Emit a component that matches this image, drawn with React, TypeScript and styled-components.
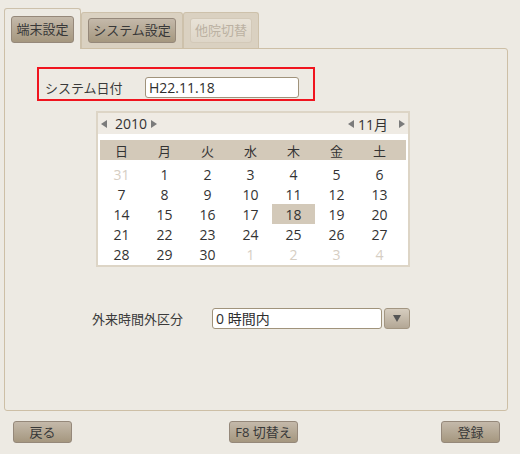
import styled, { createGlobalStyle } from "styled-components";

const GlobalStyle = createGlobalStyle`
    body {
        margin: 0;
        font-family: "Open Sans", "Noto Sans CJK JP", sans-serif;
        color: #333;
    }
`;

const Page = styled.div`
    width: 520px;
    height: 454px;
    background: #edeae3;
    display: flex;
    flex-direction: column;
    box-sizing: border-box;
`;

const TabBar = styled.div`
    display: flex;
    align-items: flex-end;
    height: 48px;
    padding: 8px 0 0 4px;
    box-sizing: border-box;
`;

const Tab = styled.div<{ $active?: boolean }>`
    border: 1px solid #cdc1ab;
    border-bottom: none;
    border-radius: 3px 3px 0 0;
    background: ${(p) => (p.$active ? "#edeae3" : "#dad1c1")};
    padding: ${(p) => (p.$active ? "7px 6px 6px" : "5px 6px 5px")};
    margin-bottom: ${(p) => (p.$active ? "-1px" : "0")};
    position: relative;
    z-index: ${(p) => (p.$active ? 1 : 0)};
    display: flex;
`;

const Button = styled.button<{ $w: number; $h?: number; $disabled?: boolean }>`
    width: ${(p) => p.$w}px;
    height: ${(p) => p.$h ?? 22}px;
    padding: 0;
    border-radius: 3px;
    font-family: "Open Sans", "Noto Sans CJK JP", sans-serif;
    font-size: 13px;
    line-height: 1;
    border: 1px solid ${(p) => (p.$disabled ? "#d3c9b8" : "#95887a")};
    background: ${(p) =>
        p.$disabled
            ? "linear-gradient(#e8e2d7, #ded6c8)"
            : "linear-gradient(#c4b9aa, #a5977f)"};
    color: ${(p) => (p.$disabled ? "#bbb1a2" : "#383838")};
    box-sizing: border-box;
    display: flex;
    align-items: center;
    justify-content: center;
`;

const Panel = styled.div`
    margin: 0 12px 0 4px;
    height: 363px;
    border: 1px solid #cdbfa6;
    border-radius: 0 3px 3px 3px;
    box-sizing: border-box;
    display: flex;
    flex-direction: column;
    align-items: flex-start;
`;

const Highlight = styled.div`
    margin: 18px 0 0 32px;
    width: 278px;
    height: 34px;
    border: 2px solid #f0141e;
    box-sizing: border-box;
    padding: 7px 0 0 6px;
    display: flex;
    align-items: center;
`;

const Label = styled.span<{ $w: number }>`
    width: ${(p) => p.$w}px;
    font-size: 13px;
    color: #3a3a3a;
`;

const TextField = styled.div<{ $w: number }>`
    width: ${(p) => p.$w}px;
    height: 21px;
    border: 1px solid #a0937b;
    border-radius: 3px;
    background: #fff;
    box-sizing: border-box;
    padding: 0 3px;
    font-size: 14px;
    line-height: 19px;
    color: #2e2e2e;
    white-space: nowrap;
`;

const Calendar = styled.div`
    margin: 10px 0 0 91px;
    width: 314px;
    border: 2px solid #ddd5c6;
    box-sizing: border-box;
    background: #fff;
`;

const CalHeader = styled.div`
    height: 21px;
    background: #efebe4;
    display: flex;
    align-items: center;
    justify-content: space-between;
    padding: 0 3px;
    font-size: 14px;
    color: #333;
`;

const Stepper = styled.div`
    display: flex;
    align-items: center;
    gap: 4px;
`;

const CalBody = styled.div`
    padding: 6px 2px 1px;
`;

const WeekRow = styled.div`
    display: grid;
    grid-template-columns: repeat(7, 43px);
    height: 20px;
    background: #d3c9b9;
    align-items: center;
    margin-bottom: 4px;
`;

const DayGrid = styled.div`
    display: grid;
    grid-template-columns: repeat(7, 43px);
    grid-auto-rows: 20px;
`;

const Cell = styled.div<{ $muted?: boolean; $selected?: boolean; $head?: boolean }>`
    display: flex;
    align-items: center;
    justify-content: center;
    font-size: ${(p) => (p.$head ? 13 : 14)}px;
    color: ${(p) => (p.$muted ? "#d6cec3" : "#333")};
    background: ${(p) => (p.$selected ? "#d3c9b9" : "transparent")};
`;

const ComboRow = styled.div`
    margin: 41px 0 0 87px;
    display: flex;
    align-items: center;
`;

const DropButton = styled.div`
    margin-left: 2px;
    width: 26px;
    height: 21px;
    border: 1px solid #a39682;
    border-radius: 3px;
    background: linear-gradient(#d6cdbf, #b3a795);
    box-sizing: border-box;
    display: flex;
    align-items: center;
    justify-content: center;
`;

const Footer = styled.div`
    display: flex;
    align-items: flex-start;
    padding: 10px 0 0 13px;
`;

const Gap = styled.div<{ $w: number }>`
    width: ${(p) => p.$w}px;
`;

const Spacer = styled.span<{ $w: number }>`
    display: inline-block;
    width: ${(p) => p.$w}px;
`;

function Arrow({ dir }: { dir: "l" | "r" }) {
    return (
        <svg width="6" height="8" viewBox="0 0 6 8">
            <polygon points={dir === "l" ? "6,0 0,4 6,8" : "0,0 6,4 0,8"} fill="#7b7b7b" />
        </svg>
    );
}

const weekdays = ["日", "月", "火", "水", "木", "金", "土"];

const days: { d: number; muted?: boolean }[] = [
    { d: 31, muted: true },
    ...Array.from({ length: 30 }, (_, i) => ({ d: i + 1 })),
    { d: 1, muted: true },
    { d: 2, muted: true },
    { d: 3, muted: true },
    { d: 4, muted: true },
];

function App() {
    return (
        <Page>
            <GlobalStyle />
            <TabBar>
                <Tab $active>
                    <Button $w={63} $h={27}>端末設定</Button>
                </Tab>
                <Tab>
                    <Button $w={88} $h={25}>システム設定</Button>
                </Tab>
                <Tab>
                    <Button $w={62} $h={25} $disabled>他院切替</Button>
                </Tab>
            </TabBar>
            <Panel>
                <Highlight>
                    <Label $w={100}>システム日付</Label>
                    <TextField $w={154}>H22.11.18</TextField>
                </Highlight>
                <Calendar>
                    <CalHeader>
                        <Stepper>
                            <Arrow dir="l" />
                            <Spacer $w={0} />
                            <span>2010</span>
                            <Arrow dir="r" />
                        </Stepper>
                        <Stepper>
                            <Arrow dir="l" />
                            <span>11月</span>
                            <Spacer $w={3} />
                            <Arrow dir="r" />
                        </Stepper>
                    </CalHeader>
                    <CalBody>
                        <WeekRow>
                            {weekdays.map((w) => (
                                <Cell key={w} $head>{w}</Cell>
                            ))}
                        </WeekRow>
                        <DayGrid>
                            {days.map((x, i) => (
                                <Cell key={i} $muted={x.muted} $selected={!x.muted && x.d === 18}>
                                    {x.d}
                                </Cell>
                            ))}
                        </DayGrid>
                    </CalBody>
                </Calendar>
                <ComboRow>
                    <Label $w={120}>外来時間外区分</Label>
                    <TextField $w={170}>0 時間内</TextField>
                    <DropButton>
                        <svg width="8" height="7" viewBox="0 0 8 7">
                            <polygon points="0,0 8,0 4,7" fill="#555" />
                        </svg>
                    </DropButton>
                </ComboRow>
            </Panel>
            <Footer>
                <Button $w={59}>戻る</Button>
                <Gap $w={157} />
                <Button $w={69}>F8 切替え</Button>
                <Gap $w={143} />
                <Button $w={59}>登録</Button>
            </Footer>
        </Page>
    );
}

export default App;
